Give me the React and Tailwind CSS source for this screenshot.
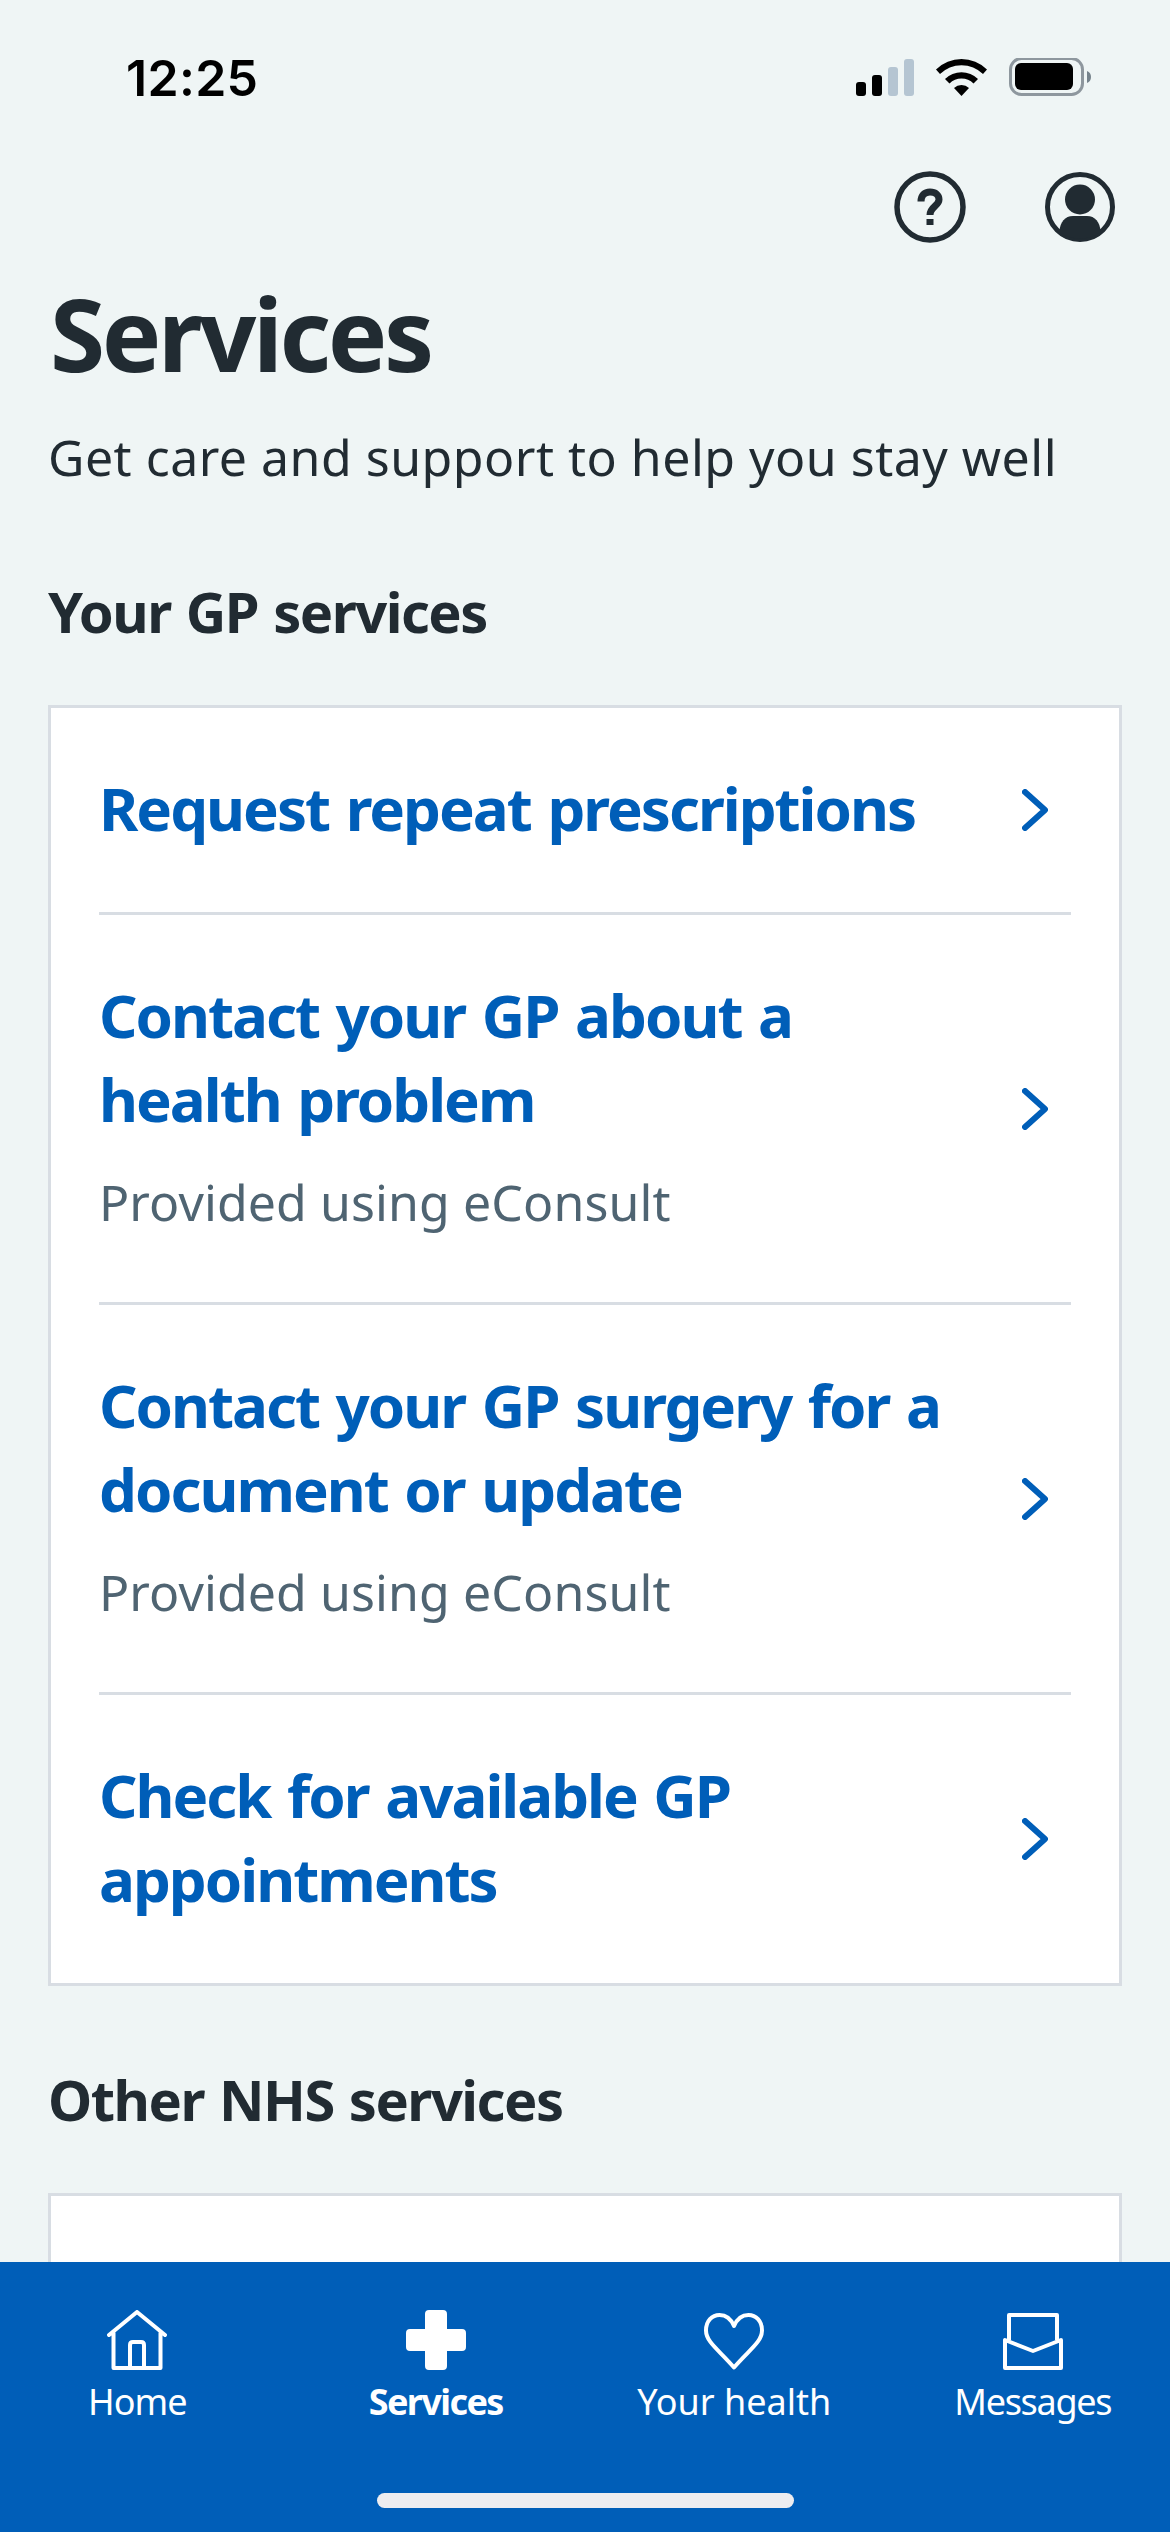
import React from "react";

const services = [
  { title: ["Request repeat prescriptions"] },
  {
    title: ["Contact your GP about a", "health problem"],
    note: "Provided using eConsult",
  },
  {
    title: ["Contact your GP surgery for a", "document or update"],
    note: "Provided using eConsult",
  },
  { title: ["Check for available GP", "appointments"] },
];

const Chevron = () => (
  <svg width="26" height="42" viewBox="0 0 26 42" fill="none" className="shrink-0">
    <path
      d="M3 3L23 21L3 39"
      stroke="#005eb8"
      strokeWidth="6"
      strokeLinecap="round"
      strokeLinejoin="round"
    />
  </svg>
);

const StatusBar = () => (
  <div className="flex items-start justify-between h-[150px] pl-[126px] pr-[78px] pt-[58px]">
    <span className="font-['Inter'] font-semibold text-[50px] leading-[40px] tracking-[0.3px] text-black">
      12:25
    </span>
    <svg width="236" height="40" viewBox="0 0 236 40">
      <rect x="0" y="24" width="10" height="14" rx="3" />
      <rect x="16" y="17" width="10" height="21" rx="3" />
      <rect x="32" y="9" width="10" height="29" rx="3" fill="#b5c5d2" />
      <rect x="48" y="1" width="10" height="37" rx="3" fill="#b5c5d2" />
      <path d="M80 11.5a36.500 36.500 0 0 1 51 0l-4 4.500a30.500 30.500 0 0 0 -43 0z" />
      <path d="M89 21a23.500 23.500 0 0 1 33 0l-4.500 4.500a17 17 0 0 0 -24 0z" />
      <path d="M98 30a11 11 0 0 1 15 0l-7.500 8z" />
      <rect x="154.500" y="0.500" width="72" height="36" rx="11" fill="none" stroke="#8e979e" strokeWidth="3" />
      <rect x="159" y="5" width="58" height="27" rx="6" />
      <path d="M231 13q4 1.500 4 6t-4 6z" fill="#76838c" />
    </svg>
  </div>
);

const Header = () => (
  <div className="flex items-center justify-end gap-[79px] h-[114px] pr-[55px]">
    <svg width="72" height="72" viewBox="0 0 72 72">
      <circle cx="36" cy="36" r="33" fill="none" stroke="#212b32" strokeWidth="5.500" />
      <path
        d="M27 30.500c0-6 3.500-9.500 9-9.500s9 3 9 7.500c0 6.500-9 7-9 15.500"
        fill="none"
        stroke="#212b32"
        strokeWidth="7"
      />
      <rect x="32.500" y="48" width="7" height="6" fill="#212b32" />
    </svg>
    <svg width="70" height="70" viewBox="0 0 70 70">
      <circle cx="35" cy="35" r="32.500" fill="none" stroke="#212b32" strokeWidth="5" />
      <circle cx="35" cy="27.500" r="15" fill="#212b32" />
      <path d="M14.500 59.500C15 50 20 44 28 44h14c8 0 13 6 13.500 15.500A33 33 0 0 1 14.500 59.500z" fill="#212b32" />
    </svg>
  </div>
);

const ServiceRow = ({ title, note, last }) => (
  <div
    className={`flex items-center justify-between pr-[23px] ${
      last ? "" : "border-b-[3px] border-[#d8dde3]"
    } ${note ? "h-[390px]" : title.length > 1 ? "h-[288px]" : "h-[207px]"}`}
  >
    <div className="pb-1">
      {title.map((line) => (
        <p
          key={line}
          className="font-bold text-[60px] leading-[84px] tracking-[-2px] [word-spacing:3px] text-[#005eb8] whitespace-nowrap"
        >
          {line}
        </p>
      ))}
      {note && (
        <p className="mt-[23px] text-[50px] leading-[76px] tracking-[0.1px] text-[#4f6472] whitespace-nowrap">
          {note}
        </p>
      )}
    </div>
    <Chevron />
  </div>
);

const NavItem = ({ label, className, children }) => (
  <div className="flex-1 flex flex-col items-center">
    <svg width="60" height="60" viewBox="0 0 60 60" fill="none" stroke="#fff" strokeWidth="4">
      {children}
    </svg>
    <span className={`mt-2 text-[36px] leading-[48px] whitespace-nowrap ${className}`}>
      {label}
    </span>
  </div>
);

const App = () => (
  <div className="flex flex-col w-[1170px] h-[2532px] overflow-hidden bg-[#eff5f5] text-[#212b32] font-['Noto_Sans',sans-serif]">
    <StatusBar />
    <Header />
    <main className="flex-1 min-h-0 overflow-hidden px-12">
      <h1 className="mt-[14px] ml-[2px] font-bold text-[100px] leading-[110px] tracking-[-3.4px]">
        Services
      </h1>
      <p className="mt-[33px] text-[50px] leading-[72px] tracking-[0.5px] whitespace-nowrap">
        Get care and support to help you stay well
      </p>
      <h2 className="mt-20 font-bold text-[56px] leading-[76px] tracking-[-1.5px] [word-spacing:2px]">
        Your GP services
      </h2>
      <div className="mt-14 border-[3px] border-[#d8dde3] bg-white px-12">
        {services.map((s, i) => (
          <ServiceRow key={i} {...s} last={i === services.length - 1} />
        ))}
      </div>
      <h2 className="mt-[75px] font-bold text-[56px] leading-[76px] tracking-[-1.5px] [word-spacing:2px]">
        Other NHS services
      </h2>
      <div className="mt-14 h-[300px] border-[3px] border-[#d8dde3] bg-white" />
    </main>
    <nav className="flex flex-col items-center h-[270px] shrink-0 bg-[#005eb8] text-white">
      <div className="flex w-[1194px] pt-12">
        <NavItem label="Home" className="tracking-[-1px]">
          <path d="M2 25L30 2L58 25M6.500 23V58H53.500V23M23 57V35q0-3 3-3h8q3 0 3 3V57" strokeLinecap="round" strokeLinejoin="round" />
        </NavItem>
        <NavItem label="Services" className="font-bold tracking-[-1.6px]">
          <path d="M23 0h14q4 0 4 4v15h15q4 0 4 4v14q0 4-4 4h-15v15q0 4-4 4h-14q-4 0-4-4v-15h-15q-4 0-4-4v-14q0-4 4-4h15v-15q0-4 4-4z" fill="#fff" stroke="none" />
        </NavItem>
        <NavItem label="Your health">
          <path d="M30 57.500C15 40 2 32 2 20.500C2 11 8 5 15.500 5C22 5 27 9 30 16C33 9 38 5 44.500 5C52 5 58 11 58 20.500C58 32 45 40 30 57.500z" strokeLinejoin="round" />
        </NavItem>
        <NavItem label="Messages" className="tracking-[-1.3px]">
          <path d="M6 30V5H54V30M2 30V58H58V30L30 41z" strokeLinejoin="round" />
        </NavItem>
      </div>
      <div className="mt-[67px] w-[417px] h-[15px] rounded-full bg-[#ededf0]" />
    </nav>
  </div>
);

export default App;
